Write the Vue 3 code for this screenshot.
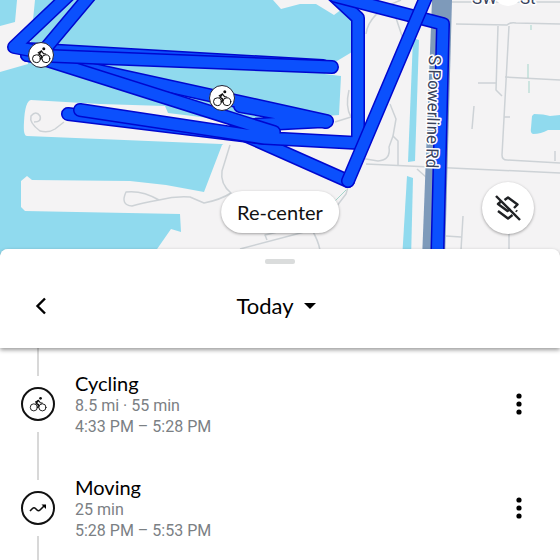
<script setup>
import { ref } from 'vue';

const day = ref('Today');

const activities = ref([
  { id: 1, title: 'Cycling', detail: '8.5 mi · 55 min', time: '4:33 PM – 5:28 PM', icon: 'bike' },
  { id: 2, title: 'Moving', detail: '25 min', time: '5:28 PM – 5:53 PM', icon: 'moving' }
]);

// recorded track, drawn leg by leg so the outlines overlap
const legs = [
  'M348 181 L240 133',
  'M68 114 L265 138',
  'M27 55 L327 121 L250 125 M240 106 L326 122',
  'M80 110 L265 138 L358 143 L358 18 L332 -6 M40 58 L274 132',
  'M27 49 L323 66',
  'M27 55 L332 67',
  'M92 -7 L40 55',
  'M72 -8 L14 47 L40 52',
  'M335 -4 L443 24 L437 270',
  'M348 181 L429 -10'
];

const markers = [
  { x: 41, y: 55 },
  { x: 222, y: 98 }
];
</script>

<template>
  <main class="timeline">
    <section class="map">
      <svg class="map-canvas" viewBox="0 0 560 260" preserveAspectRatio="xMidYMin slice">
        <defs>
          <g id="bike" fill="none" stroke="currentColor" stroke-width="1" stroke-linecap="round" stroke-linejoin="round">
            <circle cx="-4.6" cy="3.7" r="3.9" />
            <circle cx="4.9" cy="3.7" r="3.9" />
            <path d="M-2.8 -2.2 L0.5 -4 L2.5 -1.4 L4.6 -1" stroke-width="1.2" />
            <path d="M0.3 -3.8 L-2 -0.8 L0.4 0.8 L0 4" stroke-width="1.6" />
            <circle cx="2.8" cy="-6.2" r="1.5" fill="currentColor" stroke="none" />
          </g>
        </defs>

        <g class="water">
          <path d="M0 0 H17 L15 22 L0 26 Z" />
          <path d="M35 0 H273 L281 9 L300 4 L316 4 L334 15 L342 9 L352 16 V52 L337 61 L325 74 L341 76 L339 115 L300 118 L240 132 L222 145 L204 192 L166 185 L130 181 L32 180 L27 176 L21 181 V207 L25 211 L180 214 L181 232 L171 229 L155 252 V260 H0 V72 L28 64 L31 40 Z" />
          <path d="M413 38 L419 40 L415 161 L408 162 Z" />
          <path d="M407 176 L413 178 L411 260 H402 Z" />
          <path d="M534 114 Q544 114 550 116 L560 115 V130 L548 130 Q541 134 533 134 Q530 133 531 128 L532 116 Z" />
        </g>
        <path class="land" d="M31 100 L100 104 L165 106 L168 113 L225 120 L245 145 L100 139 L27 136 Q23 136 24 122 Q25 101 31 100 Z" />

        <g class="paths">
          <path d="M64 122 L55 129 Q49 133 40 131 Q29 123 31 116 Q36 110 40 116 Q42 122 34 122" />
          <path d="M230 145 L222 171 Q220 184 231 193 Q220 200 204 203 L190 197 Q175 196 159 200 Q142 190 126 192 Q120 205 132 206 Q142 203 159 200" />
          <path d="M350 180 L346 194 L330 215 L312 230 L240 249" />
          <path d="M267 240 L265 235 L290 229" />
          <path d="M312 230 Q318 240 320 250" />
          <path d="M366 164 L560 173" />
          <path d="M360 158 L378 161 Q391 160 389 147 L393 136 L398 141 V166" />
          <path d="M390 104 L396 119 L393 136" />
          <path d="M417 169 L426 177" />
          <path d="M349 90 Q345 107 351 117 L335 122" />
          <path d="M396 18 L404 42 M401 0 Q369 12 366 34" />
          <path d="M456 24 L507 25 Q510 22 516 23 L560 24" />
          <path d="M452 2 H560" />
          <path d="M498 26 L496 90 L502 96" />
          <path d="M509 26 L502 155 Q502 160 507 160 L560 163" />
          <path d="M478 83 H496 M505 77 L560 80 M504 117 H510 M474 106 L472 129 M555 151 V161" />
          <path d="M446 236 L461 237 M463 216 L461 250 M509 230 V250" />
        </g>
        <path class="trail" d="M531 25 V30 M528 64 V78 M529 81 V93 M346 190 L334 202" />

        <path class="highway" d="M432 0 H452 L445 260 H422 Z" />

        <g v-for="leg in legs" :key="leg" class="leg">
          <path class="leg-edge" :d="leg" />
          <path class="leg-fill" :d="leg" />
        </g>

        <text class="road-name" transform="translate(429 55) rotate(91.5)">S Powerline Rd</text>
        <text class="road-name" x="472" y="4">SW</text>
        <text class="road-name" x="520" y="4">St</text>
        <circle cx="508" cy="-9" r="15" fill="#fff" />

        <g v-for="m in markers" :key="m.x" class="marker" :transform="`translate(${m.x} ${m.y})`">
          <circle r="12.5" fill="#fff" stroke="#223" />
          <use href="#bike" />
        </g>
      </svg>

      <button class="recenter" type="button">Re-center</button>
      <button class="layers" type="button" aria-label="Hide layers">
        <svg width="28" height="28" viewBox="0 0 28 28">
          <path d="M10.5 6 L14 3.5 L23.5 10.5 L20 14" />
          <path d="M7 7.5 L4 10 L13.5 17 L16.5 15" />
          <path d="M4 17 L14 24.5 L18.5 21 M22 16.5 L23 17.5" />
          <path d="M2 2 L26 26" />
        </svg>
      </button>
    </section>

    <section class="sheet">
      <header class="sheet-head">
        <span class="handle"></span>
        <div class="day-bar">
          <button class="icon-btn" type="button" aria-label="Back">
            <svg width="24" height="24" viewBox="0 0 24 24">
              <path class="chevron" d="M16 4.5 L8.5 12 L16 19.5" />
            </svg>
          </button>
          <button class="day-btn" type="button">
            {{ day }}
            <svg width="12" height="6" viewBox="0 0 12 6"><path d="M0 0 H12 L6 6 Z" /></svg>
          </button>
        </div>
      </header>

      <ul class="activities">
        <li v-for="a in activities" :key="a.id" class="activity">
          <div class="rail">
            <span class="rail-line"></span>
            <span class="badge">
              <svg v-if="a.icon === 'bike'" width="20" height="20" viewBox="-11 -11 22 22"><use href="#bike" /></svg>
              <svg v-else width="20" height="20" viewBox="0 0 20 20">
                <path class="squiggle" d="M2 13 L4.5 10.5 Q6 9 7.5 10.5 L9 12 Q10.5 13.5 12 12 L16 8" />
                <path d="M13.5 6.5 H18 V11 Z" />
              </svg>
            </span>
            <span class="rail-line"></span>
          </div>
          <div class="info">
            <h2>{{ a.title }}</h2>
            <p>{{ a.detail }}</p>
            <p>{{ a.time }}</p>
          </div>
          <button class="icon-btn" type="button" :aria-label="`More options for ${a.title}`">
            <svg width="6" height="22" viewBox="0 0 6 22">
              <circle cx="3" cy="3" r="2.6" />
              <circle cx="3" cy="11" r="2.6" />
              <circle cx="3" cy="19" r="2.6" />
            </svg>
          </button>
        </li>
      </ul>
    </section>
  </main>
</template>

<style>
body { background: #fff; }
</style>

<style scoped>
.timeline { font-family: Lato, "Liberation Sans", sans-serif; color: #111; overflow: hidden; }

button { font: inherit; color: inherit; background: none; border: 0; padding: 0; cursor: pointer; }
button svg, .badge svg { display: block; }

.map { position: relative; height: 260px; background: #f4f3f4; overflow: hidden; }
.map-canvas { display: block; width: 100%; height: 100%; }
.water { fill: #90daee; }
.land { fill: #f4f3f4; }
.paths { fill: none; stroke: #cdd2d6; stroke-width: 1.5; stroke-linejoin: round; }
.trail { fill: none; stroke: #a5d5cb; }
.highway { fill: #7e9aba; }
.leg path { fill: none; stroke-linecap: round; stroke-linejoin: round; }
.leg-edge { stroke: #0007cf; stroke-width: 14; }
.leg-fill { stroke: #0b50fd; stroke-width: 11; }
.road-name { font-family: Roboto, sans-serif; font-size: 17px; fill: #39435c; stroke: #fff; stroke-width: 3; stroke-linejoin: round; paint-order: stroke; }
.marker { color: #111; }

.recenter {
  position: absolute; left: 50%; bottom: 27px; transform: translateX(-50%);
  height: 42px; padding: 0 16px; border-radius: 21px; background: #fff;
  font-size: 20px; line-height: 24px; white-space: nowrap; box-shadow: 0 1px 3px rgba(0, 0, 0, 0.35);
}
.layers {
  position: absolute; right: 26px; bottom: 26px; width: 52px; height: 52px;
  display: flex; align-items: center; justify-content: center;
  border-radius: 50%; background: #fff; box-shadow: 0 1px 3px rgba(0, 0, 0, 0.35);
}
.layers path { fill: none; stroke: #1f2124; stroke-width: 2.4; stroke-linejoin: round; }

.sheet { position: relative; margin-top: -11px; background: #fff; border-radius: 8px 8px 0 0; }
.sheet-head {
  position: relative; z-index: 1; display: flex; flex-direction: column; align-items: center;
  padding-top: 10px; background: #fff; border-radius: 8px 8px 0 0;
  box-shadow: 0 2px 4px rgba(0, 0, 0, 0.4);
}
.handle { width: 30px; height: 5px; border-radius: 2px; background: #dadcdc; }
.day-bar {
  display: grid; grid-template-columns: 48px 1fr 48px; align-items: center;
  width: 100%; height: 84px; box-sizing: border-box; padding: 0 17px;
}
.icon-btn { display: flex; align-items: center; justify-content: center; width: 48px; height: 48px; }
.chevron { fill: none; stroke: #000; stroke-width: 2.4; }
.day-btn { display: flex; align-items: center; justify-content: center; justify-self: center; gap: 10px; padding-right: 8px; font-size: 22px; line-height: 24px; color: #000; }

.activities { list-style: none; margin: 0; padding: 4px 0 0; }
.activity { display: grid; grid-template-columns: 75px 1fr 48px; align-items: center; height: 104px; padding-right: 17px; }
.rail { display: flex; flex-direction: column; align-items: center; gap: 11px; width: 75px; height: 112px; margin: -4px 0; }
.rail-line { flex: 1; width: 2px; background: #d8d8d8; }
.badge { display: flex; align-items: center; justify-content: center; width: 30px; height: 30px; border: 2px solid #111; border-radius: 50%; }
.squiggle { fill: none; stroke: #111; stroke-width: 1.6; }
.info h2 { margin: 0; font-size: 20px; line-height: 24px; font-weight: 400; color: #000; }
.info p { margin: 0; font-family: Roboto, sans-serif; font-size: 16px; line-height: 21px; color: #7b8084; }
</style>
